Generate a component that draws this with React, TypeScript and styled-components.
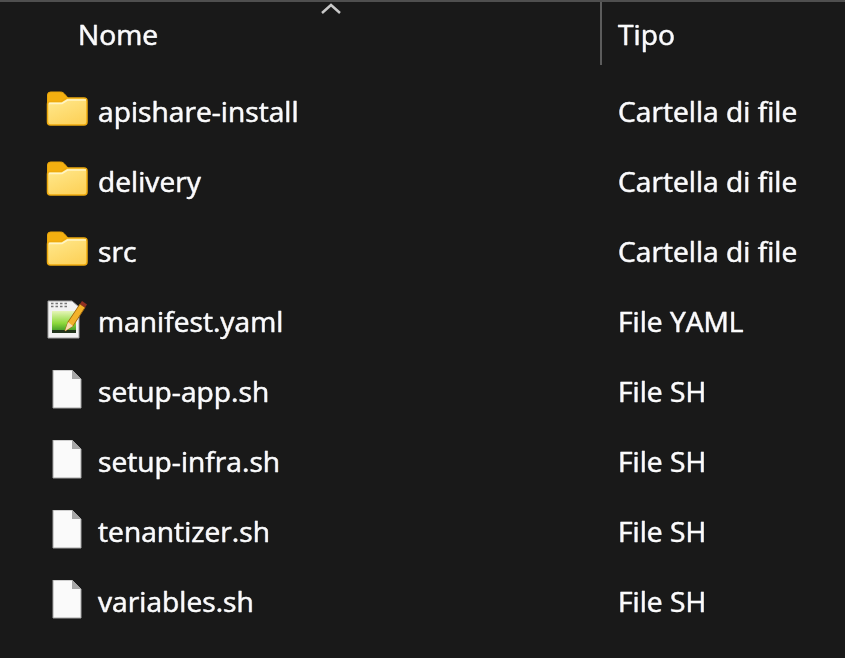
import React from "react";
import styled, { createGlobalStyle } from "styled-components";

const GlobalStyle = createGlobalStyle`
  html, body {
    margin: 0;
    padding: 0;
    background: #191919;
  }
`;

const Explorer = styled.div`
  position: relative;
  width: 845px;
  height: 658px;
  box-sizing: border-box;
  overflow: hidden;
  background: #191919;
  border-top: 2px solid #4f4f4f;
  color: #fbfbfb;
  font-family: "Open Sans", "Noto Sans", sans-serif;
  font-size: 28.2px;
  -webkit-text-stroke: 0.35px #fbfbfb;
  text-shadow: -0.7px 0 rgba(70, 150, 255, 0.55), 0.7px 0 rgba(255, 160, 50, 0.45);
  filter: blur(0.4px);
`;

const Header = styled.div`
  display: grid;
  grid-template-columns: 600px 1fr;
  height: 63px;
`;

const HeaderCell = styled.div<{ $divider?: boolean }>`
  display: flex;
  align-items: center;
  box-sizing: border-box;
  padding-left: ${(p) => (p.$divider ? "16px" : "78px")};
  border-left: ${(p) => (p.$divider ? "2px solid #5c5c5c" : "none")};
`;

const SortArrow = styled.svg`
  position: absolute;
  left: 321px;
  top: 0;
`;

const List = styled.div`
  display: flex;
  flex-direction: column;
  padding-top: 11px;
`;

const Row = styled.div`
  display: grid;
  grid-template-columns: 618px 1fr;
  height: 70px;
  align-items: center;
`;

const NameCell = styled.div`
  display: flex;
  align-items: center;
  padding-left: 46px;
  gap: 10px;
`;

const IconBox = styled.span`
  display: flex;
  width: 42px;
  height: 42px;
  flex: none;
`;

const FolderIcon = () => (
  <svg width="42" height="42" viewBox="0 3 42 42">
    <defs>
      <linearGradient id="folderFace" x1="0" y1="0" x2="0.6" y2="1">
        <stop offset="0" stopColor="#ffe98f" />
        <stop offset="1" stopColor="#fdd35c" />
      </linearGradient>
    </defs>
    <path
      d="M1.500 8a3 3 0 0 1 3-3h10c2 0 3 .8 4.500 2.500L22 11v4H1.500z"
      fill="#f4b010"
      stroke="#e8a60c"
    />
    <path
      d="M1.500 17c0-1.600 1-2.500 2.500-2.500h11.500L21 11h17a3 3 0 0 1 3 3v21a3 3 0 0 1-3 3H4.500a3 3 0 0 1-3-3z"
      fill="url(#folderFace)"
      stroke="#eeaa0e"
      strokeWidth="1.500"
    />
    <path d="M3 16.500h13L21.500 13H40" fill="none" stroke="#fff4c4" strokeWidth="1.500" />
  </svg>
);

const FileIcon = () => (
  <svg width="42" height="42" viewBox="0 2 42 42">
    <path
      d="M7 2h19l9 9v29H7z"
      fill="#fafafa"
      stroke="#a4a4a4"
      strokeWidth="1"
    />
    <path d="M26 2v9h9z" fill="#a8a8a8" />
  </svg>
);

const NotepadIcon = () => (
  <svg width="42" height="42" viewBox="0 3 42 42">
    <defs>
      <linearGradient id="padFill" x1="0" y1="0" x2="0" y2="1">
        <stop offset="0" stopColor="#e6f5b8" />
        <stop offset="0.55" stopColor="#8ed93c" />
        <stop offset="1" stopColor="#2f8a22" />
      </linearGradient>
    </defs>
    <path d="M2 4h24l7 6v31H2z" fill="#f2f2f2" stroke="#a0a0a0" strokeWidth="1" />
    <path d="M5 6.500h18M5 9.500h18" stroke="#777" strokeWidth="1.500" strokeDasharray="2.500 2" />
    <rect x="6" y="14" width="24" height="22" fill="url(#padFill)" />
    <rect x="6" y="33" width="24" height="3" fill="#22351c" />
    <path d="M19 34l3-9L34 7l5 3.500L27 29z" fill="#f3b32a" stroke="#a36a10" strokeWidth="1" />
    <path d="M19 34l3-9 5 4z" fill="#f5deb0" />
    <path d="M34 7l2-3 5 3.500-2 3z" fill="#8f2f22" />
  </svg>
);

const icons = { folder: FolderIcon, file: FileIcon, notepad: NotepadIcon };

type Entry = { name: string; type: string; icon: keyof typeof icons };

const entries: Entry[] = [
  { name: "apishare-install", type: "Cartella di file", icon: "folder" },
  { name: "delivery", type: "Cartella di file", icon: "folder" },
  { name: "src", type: "Cartella di file", icon: "folder" },
  { name: "manifest.yaml", type: "File YAML", icon: "notepad" },
  { name: "setup-app.sh", type: "File SH", icon: "file" },
  { name: "setup-infra.sh", type: "File SH", icon: "file" },
  { name: "tenantizer.sh", type: "File SH", icon: "file" },
  { name: "variables.sh", type: "File SH", icon: "file" },
];

export default function App() {
  return (
    <>
      <GlobalStyle />
      <Explorer>
        <SortArrow width="20" height="14" viewBox="0 0 20 14">
          <path d="M1 11l9-8 9 8" fill="none" stroke="#c8c8c8" strokeWidth="2.500" />
        </SortArrow>
        <Header>
          <HeaderCell>Nome</HeaderCell>
          <HeaderCell $divider>Tipo</HeaderCell>
        </Header>
        <List>
          {entries.map((entry) => {
            const Icon = icons[entry.icon];
            return (
              <Row key={entry.name}>
                <NameCell>
                  <IconBox>
                    <Icon />
                  </IconBox>
                  {entry.name}
                </NameCell>
                <div>{entry.type}</div>
              </Row>
            );
          })}
        </List>
      </Explorer>
    </>
  );
}
